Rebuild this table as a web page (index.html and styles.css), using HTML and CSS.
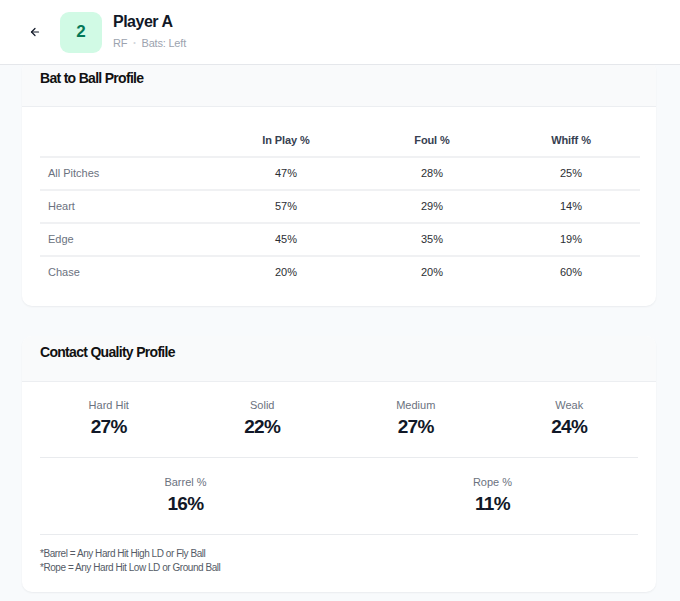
FILE: index.html
```html
<!DOCTYPE html>
<html lang="en">
<head>
<meta charset="utf-8">
<title>Player A</title>
<link rel="stylesheet" href="styles.css">
</head>
<body>
<div class="app">
  <header class="topbar">
    <button class="back" aria-label="Back">
      <svg width="12" height="12" viewBox="0 0 24 24" fill="none" stroke="#111827" stroke-width="2.4" stroke-linecap="round" stroke-linejoin="round"><path d="M19 12H5"/><path d="M12 19l-7-7 7-7"/></svg>
    </button>
    <div class="badge">2</div>
    <div class="ident">
      <div class="name">Player A</div>
      <div class="meta"><span>RF</span><span class="dot">•</span><span>Bats: Left</span></div>
    </div>
  </header>
  <main class="content">
    <section class="card card-first">
      <div class="card-head"><h2>Bat to Ball Profile</h2></div>
      <div class="card-body">
        <table class="tbl">
          <colgroup><col class="c1"><col class="c2"><col class="c3"><col class="c4"></colgroup>
          <thead>
            <tr><th></th><th>In Play %</th><th>Foul %</th><th>Whiff %</th></tr>
          </thead>
          <tbody>
            <tr><td>All Pitches</td><td>47%</td><td>28%</td><td>25%</td></tr>
            <tr><td>Heart</td><td>57%</td><td>29%</td><td>14%</td></tr>
            <tr><td>Edge</td><td>45%</td><td>35%</td><td>19%</td></tr>
            <tr><td>Chase</td><td>20%</td><td>20%</td><td>60%</td></tr>
          </tbody>
        </table>
      </div>
    </section>
    <section class="card">
      <div class="card-head"><h2>Contact Quality Profile</h2></div>
      <div class="card-body card-body-stats">
        <div class="stats four">
          <div class="stat"><div class="lbl">Hard Hit</div><div class="val">27%</div></div>
          <div class="stat"><div class="lbl">Solid</div><div class="val">22%</div></div>
          <div class="stat"><div class="lbl">Medium</div><div class="val">27%</div></div>
          <div class="stat"><div class="lbl">Weak</div><div class="val">24%</div></div>
        </div>
        <div class="stats two">
          <div class="stat"><div class="lbl">Barrel %</div><div class="val">16%</div></div>
          <div class="stat"><div class="lbl">Rope %</div><div class="val">11%</div></div>
        </div>
        <div class="notes">
          <p>*Barrel = Any Hard Hit High LD or Fly Ball</p>
          <p>*Rope = Any Hard Hit Low LD or Ground Ball</p>
        </div>
      </div>
    </section>
  </main>
</div>
</body>
</html>
```
FILE: styles.css
```css
* { box-sizing: border-box; }
html, body { margin: 0; padding: 0; }
body {
  font-family: "Liberation Sans", Arial, sans-serif;
  background: #f8fafc;
  color: #111827;
  height: 601px;
  overflow: hidden;
}
.app { display: flex; flex-direction: column; height: 601px; }
.topbar {
  height: 65px;
  flex: none;
  background: #ffffff;
  border-bottom: 1px solid #e5e7eb;
  display: flex;
  align-items: center;
  padding: 0 0 0 28px;
  position: relative;
  z-index: 2;
}
.back {
  width: 14px; height: 14px; padding: 0; margin: 0 18px 0 0;
  border: 0; background: none; display: flex; align-items: center; justify-content: center;
}
.badge {
  width: 42px; height: 41px;
  border-radius: 9px;
  background: #d1fae5;
  color: #047857;
  font-weight: 700;
  font-size: 17px;
  display: flex; align-items: center; justify-content: center;
  margin-right: 11px;
}
.ident { display: flex; flex-direction: column; gap: 4px; margin-top: -2px; }
.name { font-size: 16px; font-weight: 700; letter-spacing: -0.5px; color: #111827; line-height: 20px; }
.meta { font-size: 11px; color: #9ca3af; display: flex; align-items: center; gap: 6px; line-height: 14px; letter-spacing: -0.2px; }
.meta .dot { font-size: 7px; color: #d1d5db; }
.content {
  flex: 1;
  overflow: hidden;
  padding: 0 24px 0 22px;
  display: flex;
  flex-direction: column;
  gap: 30px;
}
.card {
  background: #ffffff;
  border-radius: 10px;
  box-shadow: 0 1px 2px rgba(15, 23, 42, 0.06);
  flex: none;
}
.card-first { margin-top: -4px; }
.card-head {
  background: #f9fafb;
  border-bottom: 1px solid #eceef1;
  border-radius: 10px 10px 0 0;
  height: 46px;
  display: flex; align-items: flex-start;
  padding: 7px 18px 0;
}
.card-first .card-head { padding-top: 8px; }
.card-head h2 {
  margin: 0;
  font-size: 14px;
  line-height: 18px;
  font-weight: 700;
  letter-spacing: -0.7px;
  color: #111111;
}
.card-body { padding: 16px 18px 17px; }
.tbl { width: 600px; border-collapse: collapse; table-layout: fixed; font-size: 11px; }
.c1 { width: 170px; } .c2 { width: 152px; } .c3 { width: 140px; } .c4 { width: 138px; }
.tbl th {
  height: 34px; font-weight: 700; color: #374151; text-align: center;
  border-bottom: 2px solid #f0f1f3; letter-spacing: -0.1px; padding-top: 2px;
}
.tbl td {
  height: 33px; text-align: center; color: #2b2e33;
  border-bottom: 2px solid #f0f1f3; padding: 0 0 2px;
}
.tbl tbody tr:last-child td { border-bottom: 0; }
.tbl td:first-child { text-align: left; padding-left: 8px; color: #6b7280; }
.card-body-stats { padding: 16px 18px 17px; }
.stats { display: grid; gap: 16px; padding-bottom: 17px; border-bottom: 1px solid #e9ebee; }
.stats.four { grid-template-columns: repeat(4, 1fr); }
.stats.two { grid-template-columns: repeat(2, 1fr); padding-top: 17px; }
.stat { text-align: center; }
.lbl { font-size: 11px; color: #6b7280; line-height: 14px; }
.val { font-size: 19px; font-weight: 700; color: #111827; line-height: 26px; margin-top: 2px; letter-spacing: -0.6px; }
.notes { padding-top: 12px; }
.notes p { margin: 0; font-size: 10px; line-height: 14px; color: #555b66; letter-spacing: -0.45px; }
```
